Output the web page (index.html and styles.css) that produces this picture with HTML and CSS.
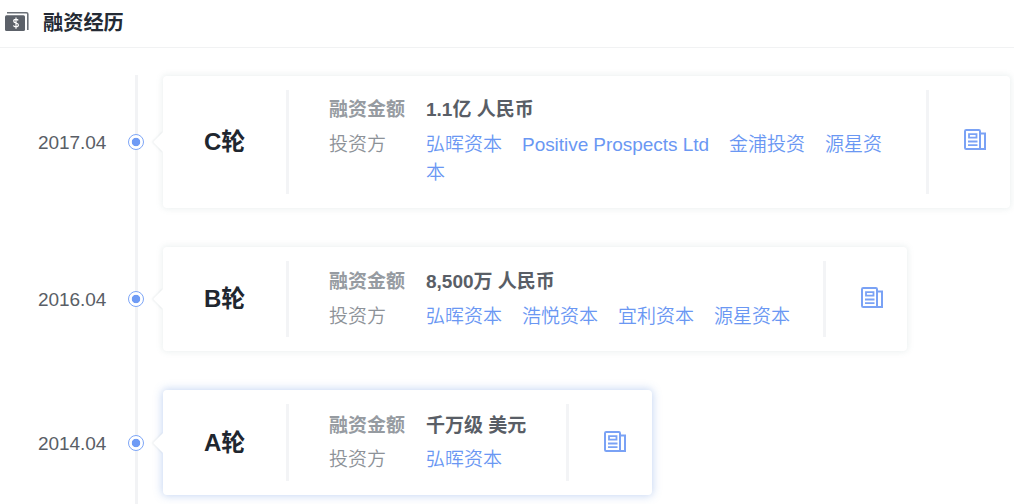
FILE: index.html
```html
<!DOCTYPE html>
<html lang="zh-CN">
<head>
<meta charset="utf-8">
<title>融资经历</title>
<link rel="stylesheet" href="styles.css">
</head>
<body>
<svg class="defs" width="0" height="0" aria-hidden="true">
  <symbol id="news" viewBox="0 0 22 22">
    <path d="M16 20H2.2Q1 20 1 18.8V2.2Q1 1 2.2 1H14.8Q16 1 16 2.2V20M16 4.5H21V20H16" fill="none" stroke="currentColor" stroke-width="2"/>
    <path d="M5 5.2H12.5V8.6H5ZM4 12.5H13.5M4 16.2H13.5" fill="none" stroke="currentColor" stroke-width="1.8"/>
  </symbol>
</svg>
<header class="heading">
  <svg class="money" viewBox="0 0 24 20" width="24" height="20">
    <path d="M2 .8H21.5Q22.8 .8 22.8 2.1V18" fill="none" stroke="#6b7077" stroke-width="1.6"/>
    <rect x="0" y="3.3" width="20" height="15.7" rx="1.5" fill="#5c6169"/>
    <path d="M13.2 8.4Q12.6 7.3 11 7.3Q8.7 7.3 8.7 9Q8.7 10.5 11 11Q13.4 11.5 13.4 13.1Q13.4 14.9 11 14.9Q9 14.9 8.4 13.5M11 5.5V16.8" fill="none" stroke="#fff" stroke-width="1.2"/>
  </svg>
  <h2 class="title">融资经历</h2>
</header>
<main class="timeline">
  <section class="event round-c">
    <time class="date">2017.04</time><i class="dot"></i>
    <article class="card">
      <h3 class="round">C轮</h3>
      <dl class="info">
        <dt class="label strong">融资金额</dt><dd class="amount">1.1亿 人民币</dd>
        <dt class="label">投资方</dt>
        <dd class="investors"><a>弘晖资本</a><a class="latin">Positive Prospects Ltd</a><a>金浦投资</a><a>源星资本</a></dd>
      </dl>
      <div class="action"><svg class="news"><use href="#news"/></svg></div>
    </article>
  </section>
  <section class="event round-b">
    <time class="date">2016.04</time><i class="dot"></i>
    <article class="card">
      <h3 class="round">B轮</h3>
      <dl class="info">
        <dt class="label strong">融资金额</dt><dd class="amount">8,500万 人民币</dd>
        <dt class="label">投资方</dt>
        <dd class="investors"><a>弘晖资本</a><a>浩悦资本</a><a>宜利资本</a><a>源星资本</a></dd>
      </dl>
      <div class="action"><svg class="news"><use href="#news"/></svg></div>
    </article>
  </section>
  <section class="event round-a">
    <time class="date">2014.04</time><i class="dot"></i>
    <article class="card active">
      <h3 class="round">A轮</h3>
      <dl class="info">
        <dt class="label strong">融资金额</dt><dd class="amount">千万级 美元</dd>
        <dt class="label">投资方</dt>
        <dd class="investors"><a>弘晖资本</a></dd>
      </dl>
      <div class="action"><svg class="news"><use href="#news"/></svg></div>
    </article>
  </section>
</main>
</body>
</html>
```
FILE: styles.css
```css
* { box-sizing: border-box; }
body {
  margin: 0;
  height: 504px;
  overflow: hidden;
  display: flex;
  flex-direction: column;
  background: #fff;
  color: #595e66;
  font: 19px/28px "Liberation Sans", "Noto Sans CJK SC", sans-serif;
}
h2, h3, dl, dd { margin: 0; }
.defs { position: absolute; }
.heading {
  flex: none;
  display: flex;
  align-items: center;
  gap: 14px;
  height: 48px;
  padding: 0 0 1px 5px;
  border-bottom: 1px solid #f1f2f3;
}
.money { overflow: visible; margin-bottom: 2px; }
.title { font-size: 20.2px; line-height: 28px; color: #242a34; }
.timeline {
  flex: none;
  height: 456px;
  padding-top: 28px;
  display: flex;
  flex-direction: column;
  gap: 39px;
  background: linear-gradient(#f2f3f5, #f2f3f5) 135px 27px / 3px 430px no-repeat;
}
.event { flex: none; display: flex; align-items: center; }
.date { width: 128px; padding: 1px 0 0 38px; letter-spacing: -.05px; }
.round-b .date, .round-a .date { padding-top: 2px; }
.dot {
  width: 16px;
  height: 16px;
  margin-right: 19px;
  border: 1px solid #7ea6f7;
  border-radius: 50%;
  background: radial-gradient(circle, #6f9bf5 3.8px, #fff 4.6px);
}
.card {
  position: relative;
  display: flex;
  padding: 14px 0;
  border-radius: 4px;
  background: #fff;
  box-shadow: 0 0 6px 1px rgba(115, 150, 150, .14);
}
.card::before {
  content: "";
  position: absolute;
  left: -7px;
  top: calc(50% - 7px);
  width: 14px;
  height: 14px;
  transform: rotate(45deg);
  background: #fff;
  box-shadow: -1px 1px 2px rgba(115, 140, 145, .13);
  clip-path: polygon(-4px -4px, 14px 14px, 14px 18px, -4px 18px);
}
.card.active { box-shadow: 0 0 8px 1px rgba(92, 138, 220, .34); }
.round-c .card { width: 847px; height: 132px; }
.round-b .card { width: 744px; height: 104px; }
.round-a .card { width: 489px; height: 105px; }
.round {
  width: 126px;
  padding-left: 41px;
  display: flex;
  align-items: center;
  border-right: 3px solid #f3f4f6;
  font-size: 24px;
  color: #20262f;
}
.info {
  flex: 1;
  display: grid;
  grid-template-columns: 97px 1fr;
  align-content: start;
  row-gap: 7px;
  padding: 6px 32px 0 40px;
}
.round-b .info { padding-top: 7px; }
.round-a .info { padding-top: 8px; row-gap: 6px; }
.label { color: #8d9298; font-weight: 350; }
.label.strong, .amount { font-weight: 700; }
.label.strong { color: #969ba1; }
.investors { color: #6a97f3; font-weight: 350; }
.investors a { margin-right: 20px; }
.investors a:last-child { margin-right: 0; }
.investors .latin { letter-spacing: -.05px; }
.action {
  width: 84px;
  padding: 0 0 2px 35px;
  display: flex;
  align-items: center;
  border-left: 3px solid #f3f4f6;
}
.round-c .action { padding-bottom: 4px; }
.round-a .action { width: 86px; }
.round-a .action { padding-bottom: 1px; }
.news { width: 22px; height: 22px; color: #7aa2f5; }
```
